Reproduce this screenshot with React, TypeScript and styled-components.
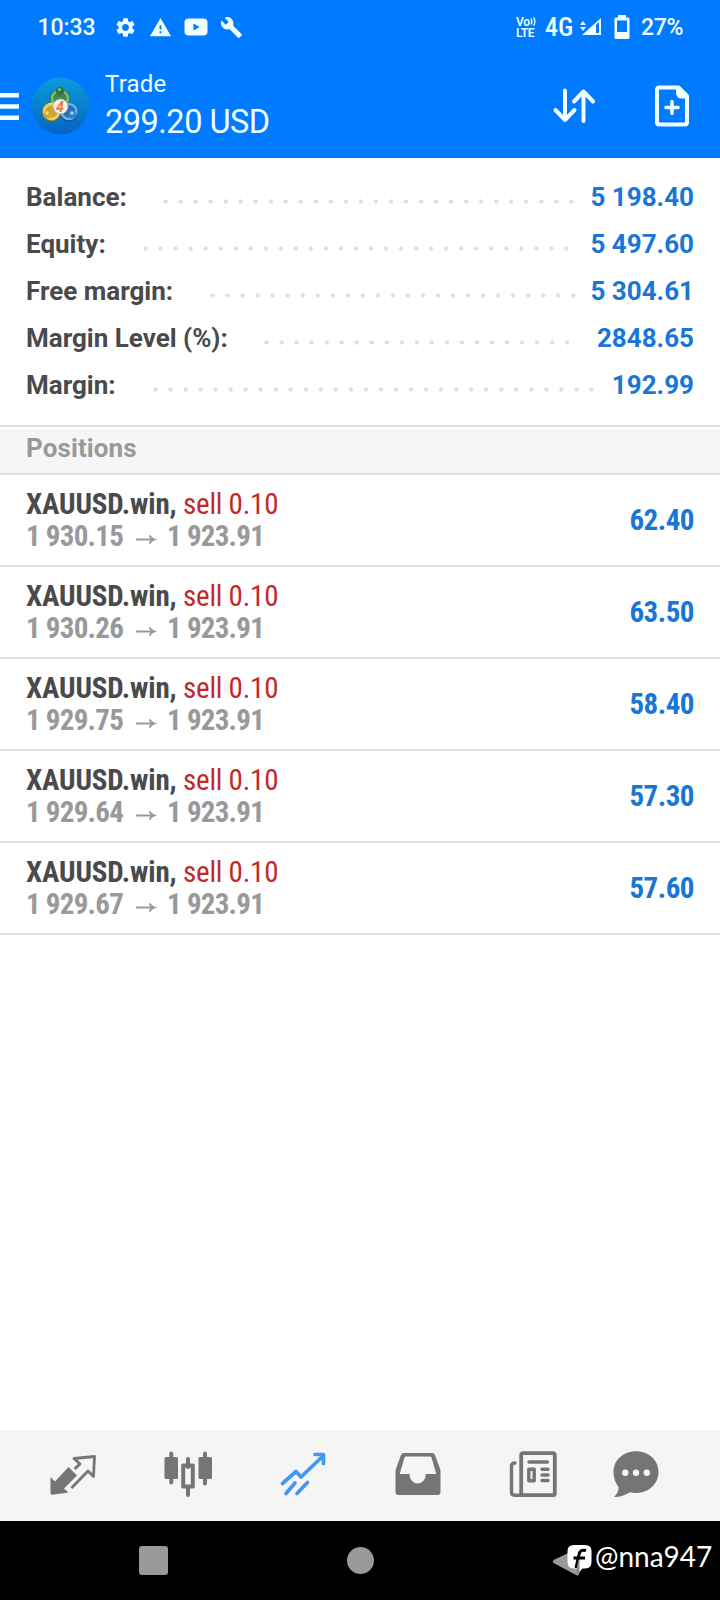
import type { ReactNode } from "react";
import styled, { createGlobalStyle } from "styled-components";
import { MdBuild, MdSettings, MdWarning } from "react-icons/md";

const GlobalStyle = createGlobalStyle`
  * { box-sizing: border-box; }
  body {
    margin: 0;
    background: #fff;
    font-family: Roboto, "Liberation Sans", sans-serif;
  }
  svg { display: block; flex: none; overflow: visible; }
`;

const Screen = styled.div`
  width: 720px;
  height: 1600px;
  display: flex;
  flex-direction: column;
  background: #fff;
  overflow: hidden;
`;

const Header = styled.header`
  height: 158px;
  background: #007aff;
  color: #f0feff;
`;

const StatusBar = styled.div`
  height: 54px;
  display: flex;
  align-items: center;
  padding-left: 37.5px;
  font-size: 23px;
  font-weight: 500;
  white-space: nowrap;
`;

const Time = styled.span`
  width: 76.5px;
  letter-spacing: -0.1px;
`;

const StatusIcons = styled.div`
  display: flex;
  align-items: center;
  gap: 12px;
  width: 402px;
`;

const VoLte = styled.div`
  width: 21px;
  display: flex;
  flex-direction: column;
  gap: 1px;
  font-size: 12px;
  font-weight: 600;
  line-height: 10px;
  letter-spacing: -0.3px;
`;

const Voice = styled.span`
  display: flex;
  align-items: center;
  gap: 1px;
`;

const Network = styled.span`
  width: 35px;
  margin-left: 8px;
  font-size: 26px;
  font-stretch: 86%;
`;

const Percent = styled.span`
  margin-left: 11px;
  letter-spacing: -0.3px;
`;

const TitleBar = styled.div`
  height: 104px;
  display: flex;
  align-items: center;
`;

const Titles = styled.div`
  width: 448px;
  margin-left: 15px;
  padding-top: 2px;
  display: flex;
  flex-direction: column;
`;

const Title = styled.div`
  font-size: 24px;
  line-height: 31px;
  letter-spacing: 0.2px;
`;

const Profit = styled.div`
  font-size: 32.5px;
  font-weight: 400;
  font-stretch: 95%;
  line-height: 45px;
  letter-spacing: -0.5px;
`;

const Summary = styled.section`
  height: 267px;
  padding: 15px 26px 0;
  font-size: 26px;
  font-weight: 700;
`;

const SummaryRow = styled.div`
  height: 47px;
  display: flex;
  align-items: center;
  color: #4a4a4c;
`;

const Leader = styled.div<{ $dots: number }>`
  width: ${(p) => (p.$dots - 1) * 15.04 + 6}px;
  height: 5px;
  margin-top: 10px;
  background: radial-gradient(circle at 2.5px 2.5px, #dedede 1.7px, transparent 2.5px) 0 0 / 15.04px 5px repeat-x;
`;

const Label = styled.span<{ $width: number }>`
  width: ${(p) => p.$width}px;
`;

const Amount = styled.span`
  margin-left: auto;
  color: #1976d6;
  letter-spacing: 0;
  white-space: pre;
`;

const SectionTitle = styled.h2`
  height: 50px;
  margin: 0;
  padding: 0 26px;
  border-top: 2px solid #dfdfdf;
  border-bottom: 2px solid #dfdfdf;
  box-shadow: inset 0 2px #fff;
  background: #f6f6f6;
  color: #97999b;
  font-size: 26px;
  font-weight: 700;
  letter-spacing: 0.1px;
  line-height: 42px;
`;

const Position = styled.div`
  height: 92px;
  display: flex;
  align-items: center;
  justify-content: space-between;
  padding: 0 26px;
  border-bottom: 2px solid #dfdfdf;
  font-family: "Roboto Condensed", Roboto, sans-serif;
  font-stretch: 75%;
  font-size: 29px;
  font-weight: 700;
  line-height: 32px;
  white-space: nowrap;
`;

const Deal = styled.div`
  color: #4a4a4c;
  letter-spacing: -0.15px;
`;

const Side = styled.span`
  color: #c02a2a;
  font-weight: 400;
  letter-spacing: -0.25px;
`;

const Prices = styled.div`
  display: flex;
  align-items: center;
  color: #97999b;
  font-weight: 700;
  letter-spacing: -0.75px;
`;

const Gain = styled.span`
  color: #1976d6;
  letter-spacing: -0.5px;
`;

const Filler = styled.div`
  flex: 1;
`;

const TabBar = styled.nav`
  height: 91px;
  display: flex;
  align-items: flex-start;
  gap: 67px;
  padding: 20px 0 0 48.5px;
  background: #f5f5f5;
`;

const Tab = styled.div<{ $active?: boolean; $shift?: number }>`
  color: ${(p) => (p.$active ? "#4297f0" : "#757575")};
  margin-left: ${(p) => p.$shift || 0}px;
`;

const SystemBar = styled.div`
  height: 79px;
  display: flex;
  align-items: center;
  background: #000;
  padding-left: 139px;
`;

const Recent = styled.div`
  width: 29px;
  height: 29px;
  border-radius: 3px;
  background: #999;
`;

const Home = styled.div`
  width: 27px;
  height: 27px;
  margin-left: 178.5px;
  border-radius: 50%;
  background: #999;
`;

const Handle = styled.span`
  margin: -9px 0 0 3px;
  color: #fff;
  font-family: Lato, sans-serif;
  font-size: 28px;
  line-height: 34px;
  white-space: nowrap;
`;

const Svg = ({ w, h, children }: { w: number; h: number; children: ReactNode }) => (
  <svg width={w} height={h} viewBox={`0 0 ${w} ${h}`} fill="none">
    {children}
  </svg>
);

const Video = () => (
  <Svg w={24} h={24}>
    <rect x="0.5" y="3.5" width="23" height="17" rx="4" fill="currentColor" />
    <path d="M9.5 8.5v7l6-3.5z" fill="#007aff" />
  </Svg>
);

const Signal = () => (
  <Svg w={34} h={20}>
    <path d="M0 8l3-4 3 4zM0 10h6l-3 4z" fill="currentColor" />
    <path d="M2 18L21 1v17zM16 8v8h3V5z" fillRule="evenodd" fill="currentColor" />
  </Svg>
);

const Waves = () => (
  <Svg w={5} h={9}>
    <path d="M0 1.5q2 3 0 6M2.5 0.5q3 4 0 8" stroke="currentColor" strokeWidth="1.3" />
  </Svg>
);

const Battery = () => (
  <Svg w={16} h={24}>
    <path d="M4 2.5V0h8v2.5h2a1.500 1.500 0 0 1 1.500 1.500v18.500a1.500 1.500 0 0 1-1.500 1.500H2A1.500 1.500 0 0 1 .5 22.500V4A1.500 1.500 0 0 1 2 2.500zM3 5.500V17h10V5.500z" fillRule="evenodd" fill="currentColor" />
  </Svg>
);

const Menu = () => (
  <Svg w={19} h={28}>
    <path d="M0 3.200h19M0 14.500h19M0 25.800h19" stroke="currentColor" strokeWidth="4.500" />
  </Svg>
);

const LogoSvg = styled.svg`
  margin-left: 13px;
`;

const Logo = () => (
  <LogoSvg width="58" height="60" viewBox="0 0 58 60">
    <defs>
      <linearGradient id="disc" x1="0" y1="0" x2="0" y2="1">
        <stop offset="0" stopColor="#0a9be0" />
        <stop offset="0.5" stopColor="#0880cc" />
        <stop offset="1" stopColor="#0564c4" />
      </linearGradient>
    </defs>
    <circle cx="28.5" cy="30" r="28.5" fill="url(#disc)" />
    <circle cx="28" cy="22.5" r="10" fill="#2f6d45" />
    <circle cx="28" cy="22.5" r="8" fill="#3c8a52" stroke="#7cbd6c" strokeWidth="2.6" />
    <circle cx="19.500" cy="36" r="9.500" fill="#7d6c2c" />
    <circle cx="19.500" cy="35.500" r="7.500" fill="#c9a534" stroke="#ecd160" strokeWidth="2.800" />
    <circle cx="37" cy="36" r="9.500" fill="#15508c" />
    <circle cx="37" cy="35.500" r="7.500" fill="#2470b4" stroke="#68b2e4" strokeWidth="2.600" />
    <circle cx="28" cy="15" r="4.200" fill="#2c7440" />
    <circle cx="27.500" cy="13.500" r="1.600" fill="#8bc67c" />
    <circle cx="15.500" cy="38.500" r="4" fill="#d3a82c" />
    <circle cx="15" cy="37" r="1.700" fill="#f6e38b" />
    <circle cx="40.500" cy="38.500" r="4" fill="#2c83c8" />
    <circle cx="40" cy="37" r="1.700" fill="#9bd9f8" />
    <circle cx="28.500" cy="30.500" r="7.500" fill="#f5f1e9" stroke="#b9b39c" strokeWidth="0.800" />
    <text x="28" y="35.500" textAnchor="middle" fontSize="14" fontWeight="700" fontStyle="italic" fill="#e9793e">
      4
    </text>
  </LogoSvg>
);

const Sort = () => (
  <Svg w={42} h={36}>
    <path d="M12 2.500V32M2.500 22l9.500 10 9.500-10M30.500 33V4M21 13.500l9.500-10 9.500 10" stroke="currentColor" strokeWidth="4" strokeLinecap="round" strokeLinejoin="round" />
  </Svg>
);

const PageSvg = styled.svg`
  margin-left: 59px;
`;

const NewOrder = () => (
  <PageSvg width="36" height="44" viewBox="0 0 36 44" fill="none">
    <path d="M5 3.500h19.500L33 12V38.500a2 2 0 0 1-2 2H5a2 2 0 0 1-2-2V5.500a2 2 0 0 1 2-2z" stroke="currentColor" strokeWidth="4" strokeLinejoin="round" />
    <path d="M22 3v6a5.500 5.500 0 0 0 5.500 5.500h6V11L25 3z" fill="currentColor" />
    <path d="M18 17.500v12M12 23.500h12" stroke="currentColor" strokeWidth="3.600" strokeLinecap="round" />
  </PageSvg>
);

const ArrowSvg = styled.svg`
  margin: 8px 12.5px 0 12.5px;
`;

const Arrow = () => (
  <ArrowSvg width="19" height="12" viewBox="0 0 19 12" fill="none">
    <path d="M0 5.500h17M13.500 1.500Q15 4.500 18 5.500q-3 1-4.500 4" stroke="currentColor" strokeWidth="1.900" />
  </ArrowSvg>
);

const Quotes = () => (
  <Svg w={48} h={48}>
    <path d="M1.500 27l4.500 4.500L19.500 17l8.500 8.500L15 38.500l4.500 4-16 2.300q-2 0-2-1.300z" fill="currentColor" />
    <path d="M25.500 19l5.500-5-6-5.500L45.500 6.500l-1 20L39 21 22.500 38" stroke="currentColor" strokeWidth="2.800" strokeLinejoin="round" />
  </Svg>
);

const Charts = () => (
  <Svg w={48} h={48}>
    <path d="M7.300 3.500v29M41 3.500v30M24 9v8M24 38v7" stroke="currentColor" strokeWidth="4" strokeLinecap="round" />
    <rect x="0.500" y="7" width="13.500" height="22" rx="1.500" fill="currentColor" />
    <rect x="34.500" y="7" width="13.500" height="22" rx="1.500" fill="currentColor" />
    <rect x="19.200" y="15.500" width="9.600" height="21" stroke="currentColor" strokeWidth="4" strokeLinejoin="round" />
  </Svg>
);

const Trade = () => (
  <Svg w={48} h={48}>
    <path d="M3.500 33.500L17 21.500l5 5.500L44 6M36 4.500h8.500v9M7 43.500L16 33M18 43.500l10.500-11" stroke="currentColor" strokeWidth="3.700" strokeLinecap="round" strokeLinejoin="round" />
  </Svg>
);

const Inbox = () => (
  <Svg w={48} h={48}>
    <path d="M10 3h28q2 0 3 2l4 11q1.500 3 1.500 6v20q0 3-3 3h-39q-3 0-3-3V22q0-3 1.500-6L7 5q1-2 3-2zM10.500 7.500L6 23v1h9.500a8.200 9.500 0 0 0 16.400 0H42v-1L37.500 7.500q-.3-1-1.500-1H12q-1.200 0-1.500 1z" fillRule="evenodd" fill="currentColor" />
  </Svg>
);

const News = () => (
  <Svg w={48} h={48}>
    <rect x="12.200" y="3.200" width="33.600" height="42" rx="2" stroke="currentColor" strokeWidth="3.800" />
    <path d="M6 13q-3.500 0-3.500 3v26q0 3.200 3 3.200h8" stroke="currentColor" strokeWidth="3.400" strokeLinecap="round" />
    <path d="M20 12h18.500M33 19.300h6M33 25h6M33 30.500h6" stroke="currentColor" strokeWidth="3.400" strokeLinecap="round" />
    <rect x="19.800" y="19.300" width="5.400" height="11.400" stroke="currentColor" strokeWidth="3.400" strokeLinejoin="round" />
  </Svg>
);

const Chat = () => (
  <Svg w={48} h={48}>
    <path d="M24 1.300C37 1.300 46.500 10.500 46.500 22S37 43 24 43q-3.500 0-6-.7Q11 47 2 47q5-5 4.500-10Q1.500 30.500 1.500 22C1.500 10.500 11 1.300 24 1.300z" fill="currentColor" />
    <circle cx="13.300" cy="22.700" r="3.200" fill="#f5f5f5" />
    <circle cx="24" cy="22.700" r="3.200" fill="#f5f5f5" />
    <circle cx="34.800" cy="22.700" r="3.200" fill="#f5f5f5" />
  </Svg>
);

const BackSvg = styled.svg`
  margin-left: 178.5px;
`;

// back triangle with the page badge drawn over it
const BackBadge = () => (
  <BackSvg width="40" height="34" viewBox="0 0 40 34">
    <path d="M1.500 16Q0 17.500 1.500 19L25 31.500q2 .5 2-1.500V5q0-1-2 0z" fill="#999" />
    <path d="M22 1h11q6.500 0 6.500 6v11q0 6.500-6.500 6.500h-2.500l-3.500 4-3-4h-2q-6.500 0-6.500-6.500V7q0-6 6.500-6z" fill="#fff" />
    <path d="M21.500 14h11.500M34 6.500q-6-1.500-7 4L24 24" stroke="#000" strokeWidth="3" fill="none" />
    <path d="M24.500 25l2-9h1v13l-2 2z" fill="#888" />
  </BackSvg>
);

// labelWidth is the distance from the label's start to the first dot
const summary = [
  { label: "Balance:", value: "5 198.40", labelWidth: 137, dots: 28 },
  { label: "Equity:", value: "5 497.60", labelWidth: 116.5, dots: 29 },
  { label: "Free margin:", value: "5 304.61", labelWidth: 184, dots: 25 },
  { label: "Margin Level (%):", value: "2848.65", labelWidth: 237.5, dots: 21 },
  { label: "Margin:", value: "192.99", labelWidth: 126.5, dots: 30 },
];

const positions = [
  { open: "1 930.15", gain: "62.40" },
  { open: "1 930.26", gain: "63.50" },
  { open: "1 929.75", gain: "58.40" },
  { open: "1 929.64", gain: "57.30" },
  { open: "1 929.67", gain: "57.60" },
];

const App = () => (
  <>
    <GlobalStyle />
    <Screen>
      <Header>
        <StatusBar>
          <Time>10:33</Time>
          <StatusIcons>
            <MdSettings size={23} />
            <MdWarning size={23} />
            <Video />
            <MdBuild size={23} />
          </StatusIcons>
          <VoLte>
            <Voice>
              Vo
              <Waves />
            </Voice>
            <span>LTE</span>
          </VoLte>
          <Network>4G</Network>
          <Signal />
          <Battery />
          <Percent>27%</Percent>
        </StatusBar>
        <TitleBar>
          <Menu />
          <Logo />
          <Titles>
            <Title>Trade</Title>
            <Profit>299.20 USD</Profit>
          </Titles>
          <Sort />
          <NewOrder />
        </TitleBar>
      </Header>
      <Summary>
        {summary.map((s) => (
          <SummaryRow key={s.label}>
            <Label $width={s.labelWidth}>{s.label}</Label>
            <Leader $dots={s.dots} />
            <Amount>{s.value}</Amount>
          </SummaryRow>
        ))}
      </Summary>
      <SectionTitle>Positions</SectionTitle>
      {positions.map((p) => (
        <Position key={p.open}>
          <div>
            <Deal>
              XAUUSD.win, <Side>sell 0.10</Side>
            </Deal>
            <Prices>
              {p.open}
              <Arrow />1 923.91
            </Prices>
          </div>
          <Gain>{p.gain}</Gain>
        </Position>
      ))}
      <Filler />
      <TabBar>
        <Tab><Quotes /></Tab>
        <Tab><Charts /></Tab>
        <Tab $active><Trade /></Tab>
        <Tab><Inbox /></Tab>
        <Tab><News /></Tab>
        <Tab $shift={-11.5}><Chat /></Tab>
      </TabBar>
      <SystemBar>
        <Recent />
        <Home />
        <BackBadge />
        <Handle>@nna947</Handle>
      </SystemBar>
    </Screen>
  </>
);

export default App;
